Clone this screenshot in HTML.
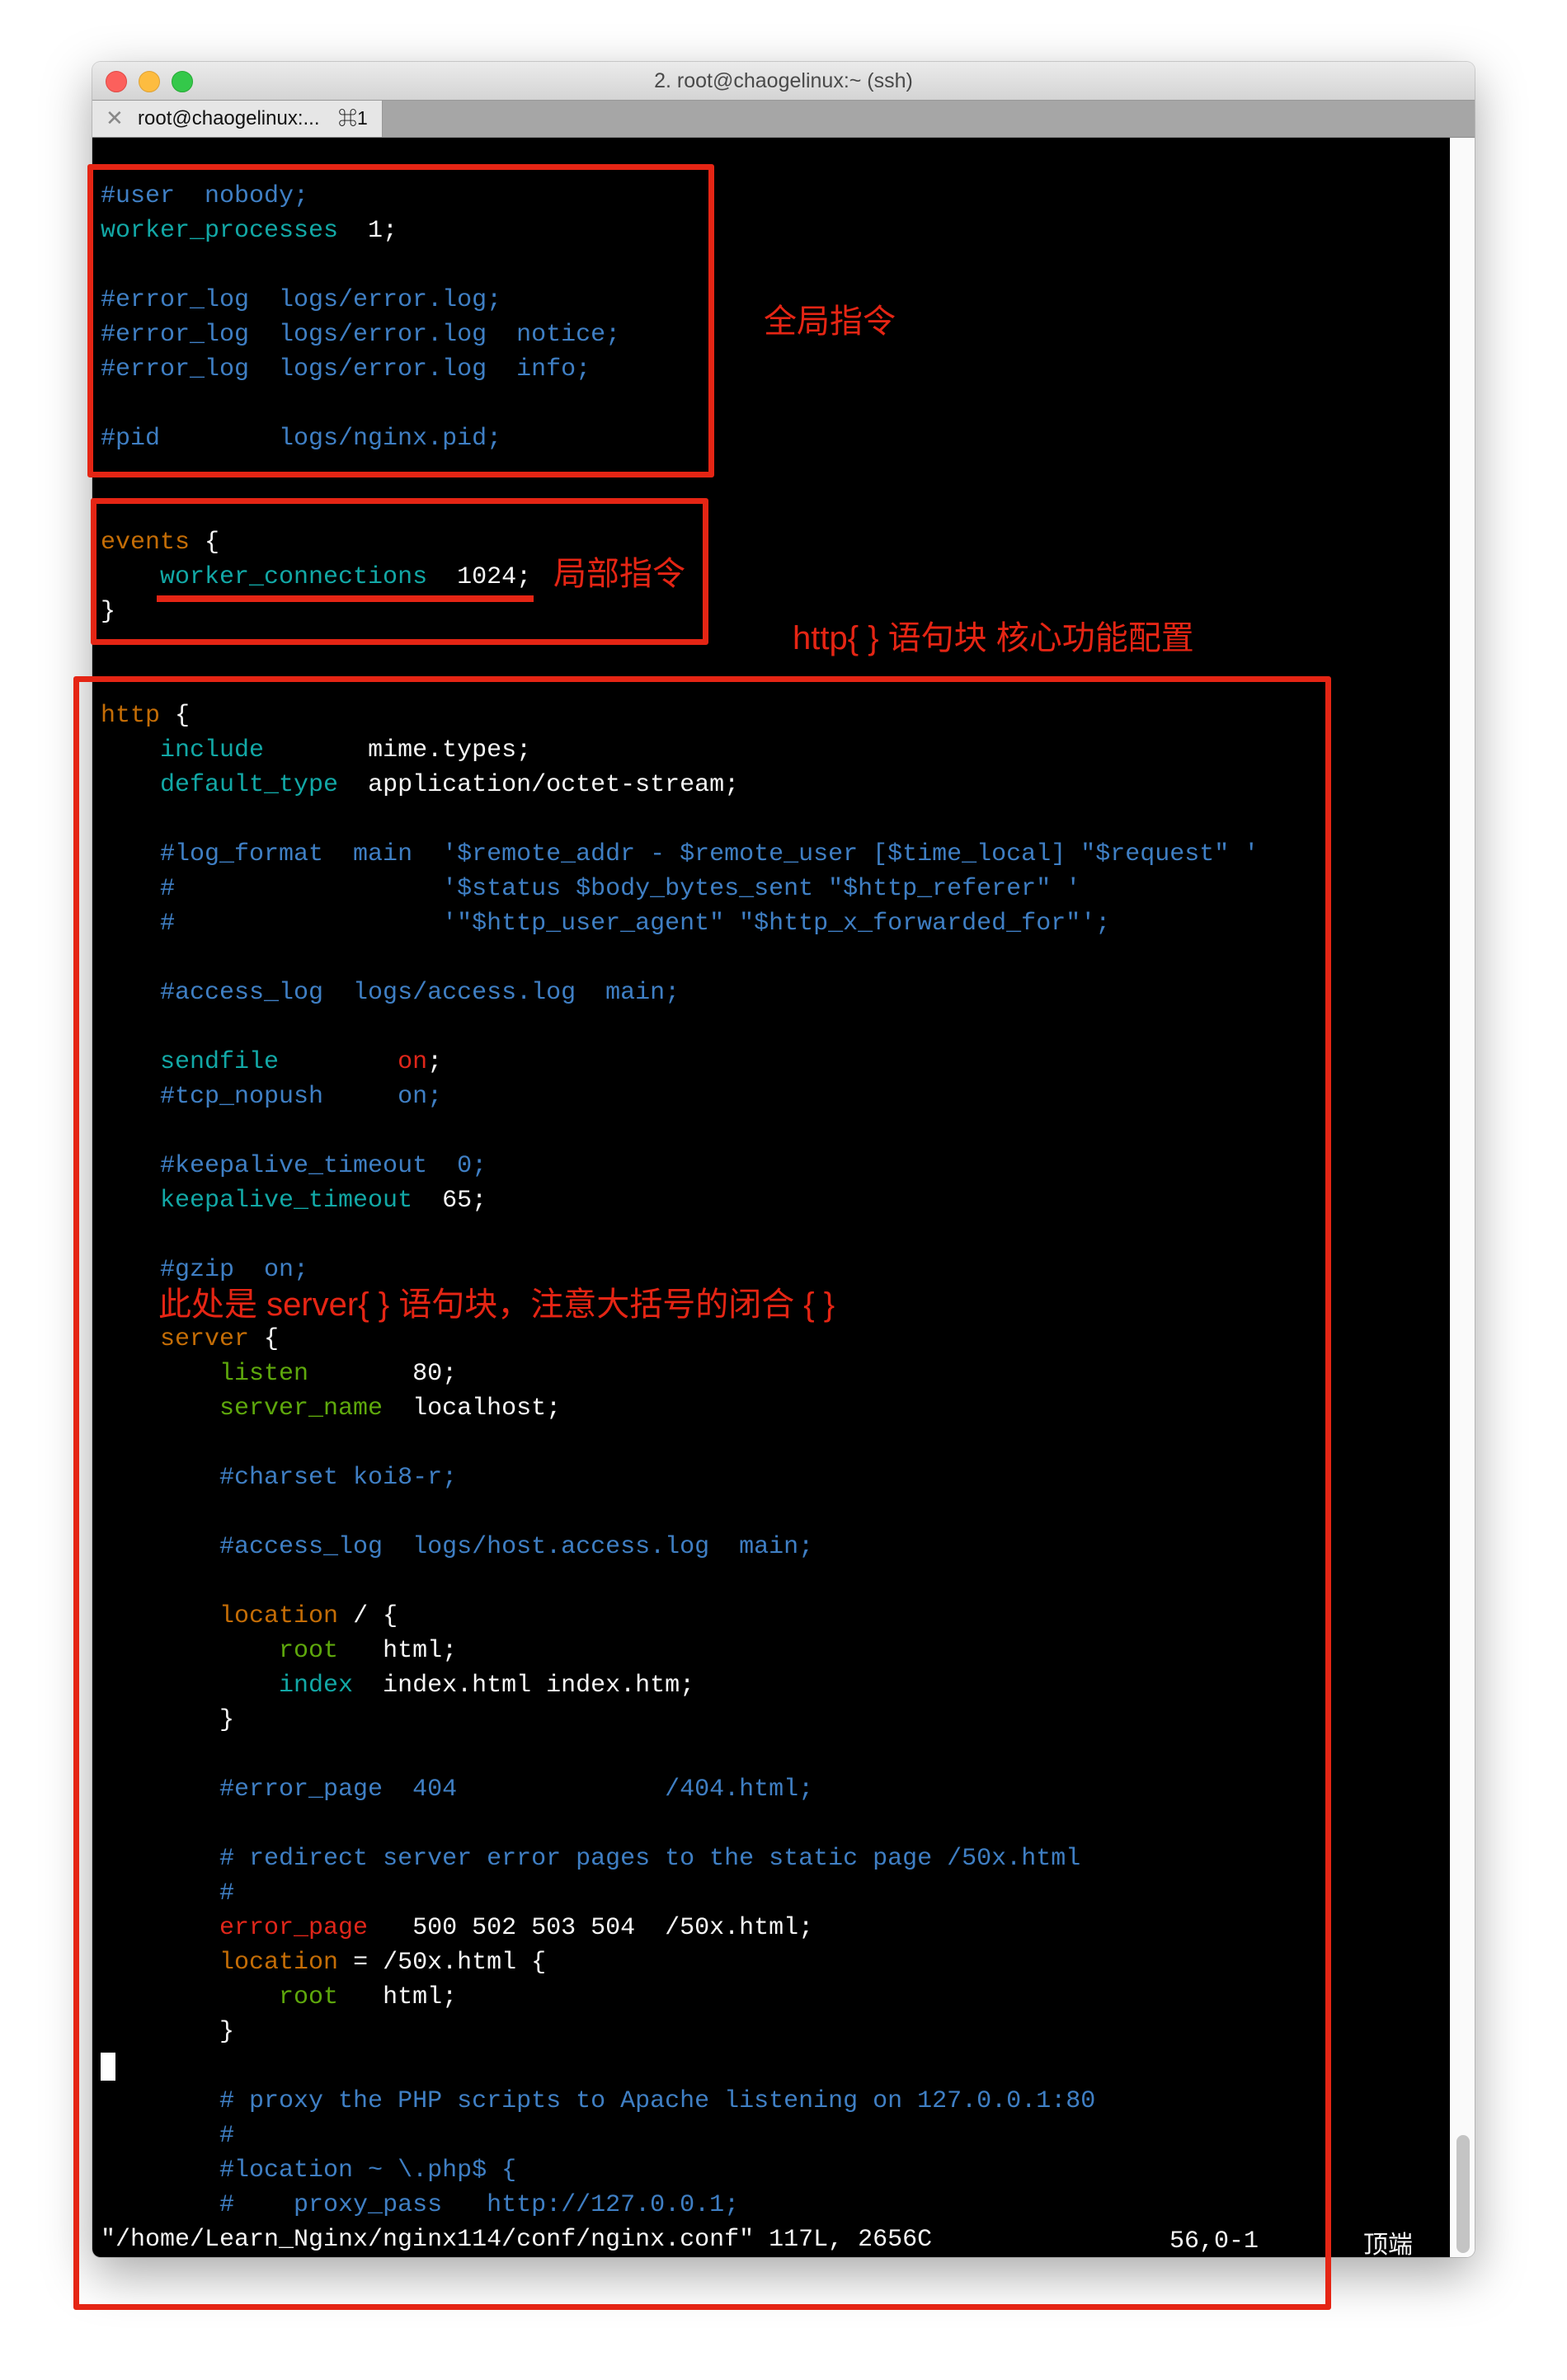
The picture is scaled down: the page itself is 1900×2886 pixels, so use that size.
<!DOCTYPE html>
<html><head><meta charset="utf-8">
<style>
html,body{margin:0;padding:0;background:#fff;}
body{width:1900px;height:2886px;position:relative;overflow:hidden;font-family:"Liberation Sans","Noto Sans CJK SC",sans-serif;}
.win{position:absolute;left:112px;top:75px;width:1676px;height:2662px;border-radius:10px;overflow:hidden;box-shadow:0 20px 60px rgba(0,0,0,0.35),0 0 0 1px rgba(0,0,0,0.15);background:#f8f8f8;}
.title{position:absolute;left:0;top:0;width:100%;height:46px;background:linear-gradient(#ebebeb,#d4d4d4);border-bottom:1px solid #999;}
.title .t{position:absolute;left:0;right:0;top:9px;text-align:center;font-size:25px;color:#4a4a4a;}
.dot{position:absolute;top:11px;width:24px;height:24px;border-radius:50%;}
.tabs{position:absolute;left:0;top:47px;width:100%;height:44px;background:#a6a6a6;border-bottom:2px solid #8a8a8a;}
.tab{position:absolute;left:0;top:0;width:351px;height:44px;background:#e6e6e6;border-right:1px solid #999;font-size:24px;color:#111;}
.term{position:absolute;left:0;top:92px;width:1646px;height:2570px;background:#000;}
.sb{position:absolute;left:1646px;top:92px;width:30px;height:2570px;background:#fafafa;}
.thumb{position:absolute;left:1654px;top:2514px;width:16px;height:143px;background:#c4c4c4;border-radius:8px;}
pre{position:absolute;left:122px;top:217px;margin:0;font-family:"Liberation Mono","Noto Sans CJK SC",monospace;font-size:30px;line-height:42px;color:#f6f6f6;white-space:pre;}
.c{color:#3f7fc4}.k{color:#12a8a6}.o{color:#c46d06}.g{color:#5ea80c}.r{color:#e0261a}
.box{position:absolute;border:7px solid #e52514;box-sizing:border-box;border-radius:3px;}
.ann{position:absolute;color:#e52514;font-size:40px;font-family:"Liberation Sans","Noto Sans CJK SC",sans-serif;line-height:1;white-space:nowrap;}
</style></head><body>
<div class="win">
  <div class="title">
    <div class="dot" style="left:16px;background:#fc605c;border:1px solid #de4a45;"></div>
    <div class="dot" style="left:56px;background:#fdbc40;border:1px solid #dea236;"></div>
    <div class="dot" style="left:96px;background:#34c84a;border:1px solid #27aa35;"></div>
    <div class="t">2. root@chaogelinux:~ (ssh)</div>
  </div>
  <div class="tabs">
    <div class="tab"><span style="position:absolute;left:16px;top:6px;color:#888;font-size:26px;">✕</span><span style="position:absolute;left:55px;top:8px;">root@chaogelinux:...</span><span style="position:absolute;left:298px;top:7px;font-size:23px;line-height:28px;">⌘1</span></div>
  </div>
  <div class="term"></div>
  <div class="sb"></div>
  <div class="thumb"></div>
</div>
<pre><span class="c">#user  nobody;</span>
<span class="k">worker_processes</span>  1;

<span class="c">#error_log  logs/error.log;</span>
<span class="c">#error_log  logs/error.log  notice;</span>
<span class="c">#error_log  logs/error.log  info;</span>

<span class="c">#pid        logs/nginx.pid;</span>


<span class="o">events</span> {
    <span class="k">worker_connections</span>  1024;
}


<span class="o">http</span> {
    <span class="k">include</span>       mime.types;
    <span class="k">default_type</span>  application/octet-stream;

    <span class="c">#log_format  main  '$remote_addr - $remote_user [$time_local] "$request" '</span>
    <span class="c">#                  '$status $body_bytes_sent "$http_referer" '</span>
    <span class="c">#                  '"$http_user_agent" "$http_x_forwarded_for"';</span>

    <span class="c">#access_log  logs/access.log  main;</span>

    <span class="k">sendfile</span>        <span class="r">on</span>;
    <span class="c">#tcp_nopush     on;</span>

    <span class="c">#keepalive_timeout  0;</span>
    <span class="k">keepalive_timeout</span>  65;

    <span class="c">#gzip  on;</span>

    <span class="o">server</span> {
        <span class="g">listen</span>       80;
        <span class="g">server_name</span>  localhost;

        <span class="c">#charset koi8-r;</span>

        <span class="c">#access_log  logs/host.access.log  main;</span>

        <span class="o">location</span> / {
            <span class="g">root</span>   html;
            <span class="k">index</span>  index.html index.htm;
        }

        <span class="c">#error_page  404              /404.html;</span>

        <span class="c"># redirect server error pages to the static page /50x.html</span>
        <span class="c">#</span>
        <span class="r">error_page</span>   500 502 503 504  /50x.html;
        <span class="o">location</span> = /50x.html {
            <span class="g">root</span>   html;
        }
<span style="background:#fff">&nbsp;</span>
        <span class="c"># proxy the PHP scripts to Apache listening on 127.0.0.1:80</span>
        <span class="c">#</span>
        <span class="c">#location ~ \.php$ {</span>
        <span class="c">#    proxy_pass   http://127.0.0.1;</span>
"/home/Learn_Nginx/nginx114/conf/nginx.conf" 117L, 2656C</pre>
<div style="position:absolute;left:1418px;top:2697px;font-family:'Liberation Mono',monospace;font-size:30px;line-height:42px;color:#f6f6f6;">56,0-1</div>
<div style="position:absolute;left:1653px;top:2699px;font-family:'Noto Sans CJK SC',sans-serif;font-size:30px;line-height:40px;color:#f6f6f6;">顶端</div>

<div class="box" style="left:106px;top:199px;width:760px;height:380px;"></div>
<div class="box" style="left:110px;top:604px;width:749px;height:178px;"></div>
<div class="box" style="left:89px;top:820px;width:1525px;height:1981px;"></div>
<div style="position:absolute;left:190px;top:722px;width:457px;height:8px;background:#e52514;"></div>

<div class="ann" style="left:926px;top:370px;">全局指令</div>
<div class="ann" style="left:671px;top:676px;">局部指令</div>
<div class="ann" style="left:961px;top:754px;">http{ } 语句块 核心功能配置</div>
<div class="ann" style="left:192px;top:1562px;">此处是 server{ } 语句块，注意大括号的闭合 { }</div>
</body></html>
